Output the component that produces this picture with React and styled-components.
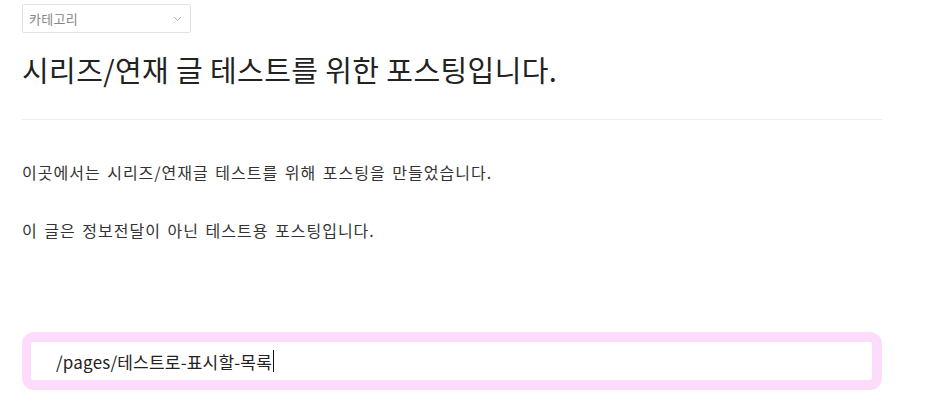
import React from "react";
import styled, { createGlobalStyle } from "styled-components";

const Global = createGlobalStyle`
  html, body { margin: 0; padding: 0; background: #fff; }
  body { font-family: "Noto Sans CJK KR", "Noto Sans", sans-serif; color: #222; }
`;

const Page = styled.div`
  width: 860px;
  padding: 4px 0 0 22px;
  display: flex;
  flex-direction: column;
`;

const Select = styled.div`
  width: 169px;
  height: 29px;
  box-sizing: border-box;
  border: 1px solid #e3e3e3;
  border-radius: 2px;
  display: flex;
  align-items: center;
  justify-content: space-between;
  padding: 0 8px 0 6px;
  font-size: 13px;
  letter-spacing: 0.3px;
  color: #888;
`;

const Chevron = styled.svg`
  width: 9px;
  height: 6px;
`;

const Title = styled.h1`
  margin: 16px 0 0;
  font-size: 29px;
  font-weight: 400;
  line-height: 40px;
  color: #222;
  letter-spacing: 0.4px;
`;

const Divider = styled.hr`
  margin: 30px 0 0;
  border: 0;
  height: 1px;
  background: #eeeeee;
`;

const Body = styled.div`
  display: flex;
  flex-direction: column;
  gap: 34px;
  margin-top: 40px;
`;

const Para = styled.p`
  margin: 0;
  font-size: 16px;
  line-height: 24px;
  color: #333;
  word-spacing: 2px;
  letter-spacing: 1px;
`;

const Frame = styled.div`
  margin-top: 90px;
  background: #fddcfb;
  border-radius: 12px;
  padding: 10px 10px 10px 9px;
`;

const Field = styled.div`
  background: #fff;
  border-radius: 2px;
  height: 38px;
  display: flex;
  align-items: center;
  padding-left: 25px;
  font-size: 17px;
  letter-spacing: 0.2px;
  color: #222;
`;

const Caret = styled.span`
  display: inline-block;
  width: 1px;
  height: 22px;
  background: #111;
  margin-left: 1px;
`;

export default function App() {
  return (
    <>
      <Global />
      <Page>
        <Select>
          <span>카테고리</span>
          <Chevron viewBox="0 0 9 6">
            <path d="M1 1 L4.5 4.5 L8 1" fill="none" stroke="#aaa" strokeWidth="1" />
          </Chevron>
        </Select>
        <Title>시리즈/연재 글 테스트를 위한 포스팅입니다.</Title>
        <Divider />
        <Body>
          <Para>이곳에서는 시리즈/연재글 테스트를 위해 포스팅을 만들었습니다.</Para>
          <Para>이 글은 정보전달이 아닌 테스트용 포스팅입니다.</Para>
        </Body>
        <Frame>
          <Field>
            /pages/테스트로-표시할-목록
            <Caret />
          </Field>
        </Frame>
      </Page>
    </>
  );
}
